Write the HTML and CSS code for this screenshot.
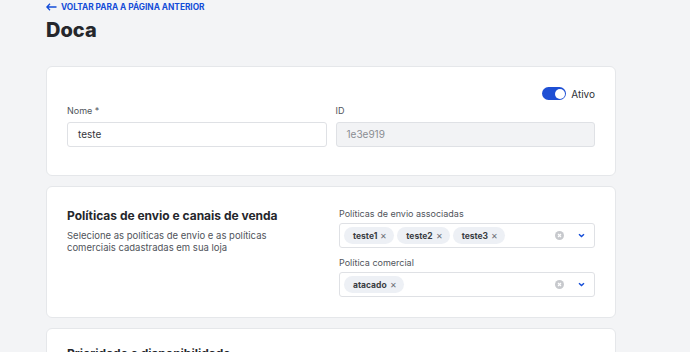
FILE: index.html
```html
<!DOCTYPE html>
<html lang="pt-BR">
<head>
    <meta charset="UTF-8">
    <title>Doca</title>
    <link rel="stylesheet" href="styles.css">
</head>
<body>
    <div class="page">
        <a class="back" href="#">
            <svg width="11" height="8" viewBox="0 0 11 8"><path d="M4 0.8 L0.9 4 L4 7.2 M1 4 H10.5" fill="none" stroke="#134cd8" stroke-width="1.3"/></svg>
            Voltar para a página anterior
        </a>
        <h1>Doca</h1>

        <div class="card first">
            <div class="toggle-row">
                <span class="toggle"><span class="knob"></span></span>
                <span class="toggle-label">Ativo</span>
            </div>
            <div class="grid-2 tight">
                <div class="field">
                    <label>Nome *</label>
                    <div class="input">teste</div>
                </div>
                <div class="field">
                    <label>ID</label>
                    <div class="input disabled">1e3e919</div>
                </div>
            </div>
        </div>

        <div class="card">
            <div class="grid-2">
                <div class="intro">
                    <h2>Políticas de envio e canais de venda</h2>
                    <p>Selecione as políticas de envio e as políticas comerciais cadastradas em sua loja</p>
                </div>
                <div class="selects">
                    <div class="field">
                        <label>Políticas de envio associadas</label>
                        <div class="select">
                            <span class="chip">teste1 <span class="x">✕</span></span>
                            <span class="chip">teste2 <span class="x">✕</span></span>
                            <span class="chip">teste3 <span class="x">✕</span></span>
                            <span class="spacer"></span>
                            <span class="clear"><svg width="9" height="9" viewBox="0 0 9 9"><circle cx="4.5" cy="4.5" r="4.5" fill="#c7c9cd"/><path d="M3 3 L6 6 M6 3 L3 6" stroke="#fff" stroke-width="1.2"/></svg></span>
                            <span class="chev"><svg width="7" height="5" viewBox="0 0 7 5"><path d="M1 1.2 L3.5 3.6 L6 1.2" fill="none" stroke="#134cd8" stroke-width="1.4"/></svg></span>
                        </div>
                    </div>
                    <div class="field second">
                        <label>Política comercial</label>
                        <div class="select">
                            <span class="chip">atacado <span class="x">✕</span></span>
                            <span class="spacer"></span>
                            <span class="clear"><svg width="9" height="9" viewBox="0 0 9 9"><circle cx="4.5" cy="4.5" r="4.5" fill="#c7c9cd"/><path d="M3 3 L6 6 M6 3 L3 6" stroke="#fff" stroke-width="1.2"/></svg></span>
                            <span class="chev"><svg width="7" height="5" viewBox="0 0 7 5"><path d="M1 1.2 L3.5 3.6 L6 1.2" fill="none" stroke="#134cd8" stroke-width="1.4"/></svg></span>
                        </div>
                    </div>
                </div>
            </div>
        </div>

        <div class="card last">
            <h2>Prioridade e disponibilidade</h2>
        </div>
    </div>
</body>
</html>
```

FILE: styles.css
```css
* {
    box-sizing: border-box;
    margin: 0;
    padding: 0;
}

body {
    background: #f3f4f6;
    font-family: Inter, "Noto Sans", sans-serif;
    color: #25272c;
    overflow: hidden;
}

.page {
    padding: 0 74px 0 46px;
}

.back {
    display: flex;
    align-items: center;
    gap: 4px;
    height: 14px;
    font-size: 8.3px;
    font-weight: 700;
    text-transform: uppercase;
    color: #134cd8;
    text-decoration: none;
}

h1 {
    font-size: 20px;
    line-height: 24px;
    font-weight: 800;
    margin: 4px 0 24px;
    color: #25272c;
}

.card {
    background: #fff;
    border: 1px solid #e5e7ea;
    border-radius: 6px;
    padding: 20px;
    margin-bottom: 10px;
}

.card.first {
    padding-bottom: 28px;
}

.toggle-row {
    display: flex;
    justify-content: flex-end;
    align-items: center;
    gap: 5px;
    height: 13px;
    margin-bottom: 4px;
}

.toggle {
    width: 24px;
    height: 13px;
    border-radius: 7px;
    background: #1e4fd4;
    display: flex;
    align-items: center;
    justify-content: flex-end;
    padding: 0 1.5px;
}

.knob {
    width: 10px;
    height: 10px;
    border-radius: 50%;
    background: #fff;
}

.toggle-label {
    font-size: 10px;
    color: #2e3035;
}

.grid-2 {
    display: grid;
    grid-template-columns: 1fr 1fr;
    gap: 16px;
}

.grid-2.tight {
    gap: 9px;
}

.field label {
    display: block;
    font-size: 9px;
    line-height: 14px;
    color: #50545b;
    margin-bottom: 4px;
}

.selects .field label {
    margin-bottom: 2px;
}

.input {
    height: 25px;
    border: 1px solid #dfe1e5;
    border-radius: 3px;
    padding: 0 10px;
    font-size: 10px;
    line-height: 23px;
    color: #34363b;
}

.input.disabled {
    background: #f2f3f5;
    color: #8a8d93;
}

.intro h2,
.card h2 {
    font-size: 12px;
    line-height: 16px;
    font-weight: 700;
    color: #25272c;
    margin-top: 1px;
}

.intro p {
    font-size: 9.5px;
    line-height: 12px;
    color: #50545b;
    margin-top: 6px;
    width: 210px;
}

.select {
    height: 25px;
    border: 1px solid #dfe1e5;
    border-radius: 3px;
    display: flex;
    align-items: center;
    gap: 3px;
    padding: 0 9px 0 4px;
}

.field.second {
    margin-top: 8px;
}

.chip {
    height: 17px;
    border-radius: 9px;
    background: #edf0f5;
    font-size: 8.5px;
    font-weight: 700;
    color: #3a3d43;
    display: flex;
    align-items: center;
    padding: 0 7px 0 9px;
    gap: 3px;
}

.chip .x {
    font-weight: 400;
    color: #6b6e74;
    font-size: 8px;
}

.spacer {
    flex: 1;
}

.clear {
    display: flex;
    margin-right: 11px;
}

.chev {
    display: flex;
}

.card.last {
    padding-top: 16px;
}
```
